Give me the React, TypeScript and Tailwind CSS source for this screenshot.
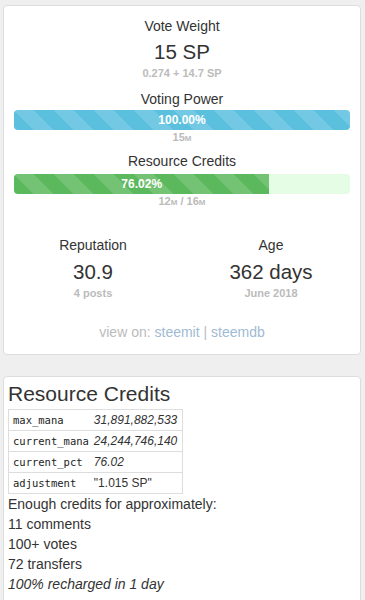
import React from "react";

const stripes =
  "bg-[linear-gradient(45deg,rgba(255,255,255,.15)_25%,transparent_25%,transparent_50%,rgba(255,255,255,.15)_50%,rgba(255,255,255,.15)_75%,transparent_75%,transparent)] bg-[length:40px_40px]";

const Unit: React.FC<{ children: React.ReactNode }> = ({ children }) => (
  <span className="text-[8px] leading-none">{children}</span>
);

const rows: [string, string, boolean][] = [
  ["max_mana", "31,891,882,533", true],
  ["current_mana", "24,244,746,140", true],
  ["current_pct", "76.02", true],
  ["adjustment", '"1.015 SP"', false],
];

const App: React.FC = () => {
  return (
    <div className="min-h-[600px] bg-[#efefef] pt-[5px] pl-[3px] pr-[4px] font-['Liberation_Sans',Arial,sans-serif] text-[#333]">
      <div className="bg-white border border-[#ddd] rounded-[4px] pt-[10px] pb-[12px] px-[10px] text-center">
        <div className="text-[14px] leading-[20px]">Vote Weight</div>
        <div className="mt-[2px] text-[20.5px] leading-[28px]">15 SP</div>
        <div className="text-[11px] leading-[14px] font-bold text-[#bbb]">0.274 + 14.7 SP</div>

        <div className="mt-[9px] text-[14px] leading-[20px]">Voting Power</div>
        <div className="mt-[1px] h-[20px] rounded-[4px] bg-[#f5f5f5] overflow-hidden">
          <div className={`h-full w-full bg-[#5bc0de] ${stripes} text-white text-[12px] font-bold leading-[20px]`}>
            100.00%
          </div>
        </div>
        <div className="h-[14px] text-[11px] leading-[14px] font-bold text-[#bbb]">
          15<Unit>M</Unit>
        </div>

        <div className="mt-[7px] text-[14px] leading-[20px]">Resource Credits</div>
        <div className="mt-[3px] h-[20px] rounded-[4px] bg-[#e4fde4] overflow-hidden flex">
          <div
            className={`h-full bg-[#5cb85c] ${stripes} text-white text-[12px] font-bold leading-[20px]`}
            style={{ width: "76.02%" }}
          >
            76.02%
          </div>
        </div>
        <div className="h-[14px] text-[11px] leading-[14px] font-bold text-[#bbb]">
          12<Unit>M</Unit> / 16<Unit>M</Unit>
        </div>

        <div className="mt-[27px] grid grid-cols-2 -mx-[10px]">
          <div>
            <div className="text-[14px] leading-[20px]">Reputation</div>
            <div className="mt-[3px] text-[20.5px] leading-[28px]">30.9</div>
            <div className="text-[11px] leading-[14px] font-bold text-[#bbb]">4 posts</div>
          </div>
          <div>
            <div className="text-[14px] leading-[20px]">Age</div>
            <div className="mt-[3px] text-[20.5px] leading-[28px]">362 days</div>
            <div className="text-[11px] leading-[14px] font-bold text-[#bbb]">June 2018</div>
          </div>
        </div>

        <div className="mt-[22px] text-[14px] leading-[20px] text-[#bbb]">
          view on: <a className="text-[#9fbad3]">steemit</a> | <a className="text-[#9fbad3]">steemdb</a>
        </div>
      </div>

      <div className="mt-[21px] bg-white border border-[#ddd] rounded-[4px] pt-[5px] px-[4px] pb-[10px]">
        <h3 className="text-[21px] leading-[24px]">Resource Credits</h3>
        <table className="mt-[3px] border border-[#ddd] border-collapse">
          <tbody>
            {rows.map(([k, v, it]) => (
              <tr key={k} className="border-t border-[#ddd]">
                <td className="pl-[4px] pr-[5px] h-[20px] leading-[20px] text-[10.5px] font-['DejaVu_Sans_Mono',monospace] text-[#222]">
                  {k}
                </td>
                <td className={`pr-[5px] h-[20px] leading-[20px] text-[12px] text-[#333] ${it ? "italic" : ""}`}>{v}</td>
              </tr>
            ))}
          </tbody>
        </table>
        <div className="text-[14px] leading-[20px]">
          <div>Enough credits for approximately:</div>
          <div>11 comments</div>
          <div>100+ votes</div>
          <div>72 transfers</div>
          <div className="italic">100% recharged in 1 day</div>
        </div>
      </div>
    </div>
  );
};

export default App;
